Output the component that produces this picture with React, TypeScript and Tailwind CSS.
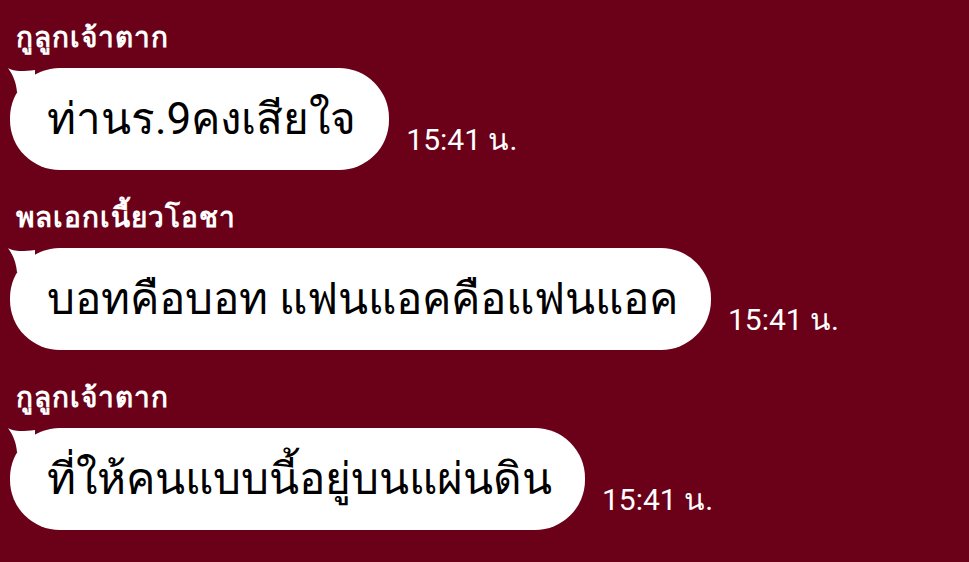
const messages = [
    { name: 'กูลูกเจ้าตาก', text: 'ท่านร.9คงเสียใจ', time: '15:41 น.' },
    { name: 'พลเอกเนี้ยวโอชา', text: 'บอทคือบอท แฟนแอคคือแฟนแอค', time: '15:41 น.' },
    { name: 'กูลูกเจ้าตาก', text: 'ที่ให้คนแบบนี้อยู่บนแผ่นดิน', time: '15:41 น.' },
];

function Tail() {
    return (
        <svg className="absolute left-[-3px] top-0" width="30" height="24" viewBox="0 0 30 24">
            <path d="M1 0 C6 3 12 4 28 2 L28 24 L10 24 C9 14 6 7 1 0 Z" fill="#ffffff" />
        </svg>
    );
}

export default function App() {
    return (
        <div
            className="w-[969px] h-[562px] overflow-hidden bg-[#6b0119] pt-[22px]"
            style={{ fontFamily: 'Roboto, "Noto Sans", sans-serif' }}
        >
            {messages.map((m, i) => (
                <div key={i} className="mb-[32px]">
                    <div className="pl-[16px] h-[32px] leading-[32px] text-[28px] tracking-[1px] font-bold text-white">
                        {m.name}
                    </div>
                    <div className="mt-[14px] flex items-end pl-[10px]">
                        <div className="relative h-[102px] rounded-[50px] bg-white flex items-center pl-[37px] pr-[33px]">
                            <Tail />
                            <span className="relative text-[44px] text-black leading-none whitespace-nowrap">
                                {m.text}
                            </span>
                        </div>
                        <span className="ml-[17px] mb-[15px] text-[30px] leading-none text-white whitespace-nowrap">
                            {m.time}
                        </span>
                    </div>
                </div>
            ))}
        </div>
    );
}
